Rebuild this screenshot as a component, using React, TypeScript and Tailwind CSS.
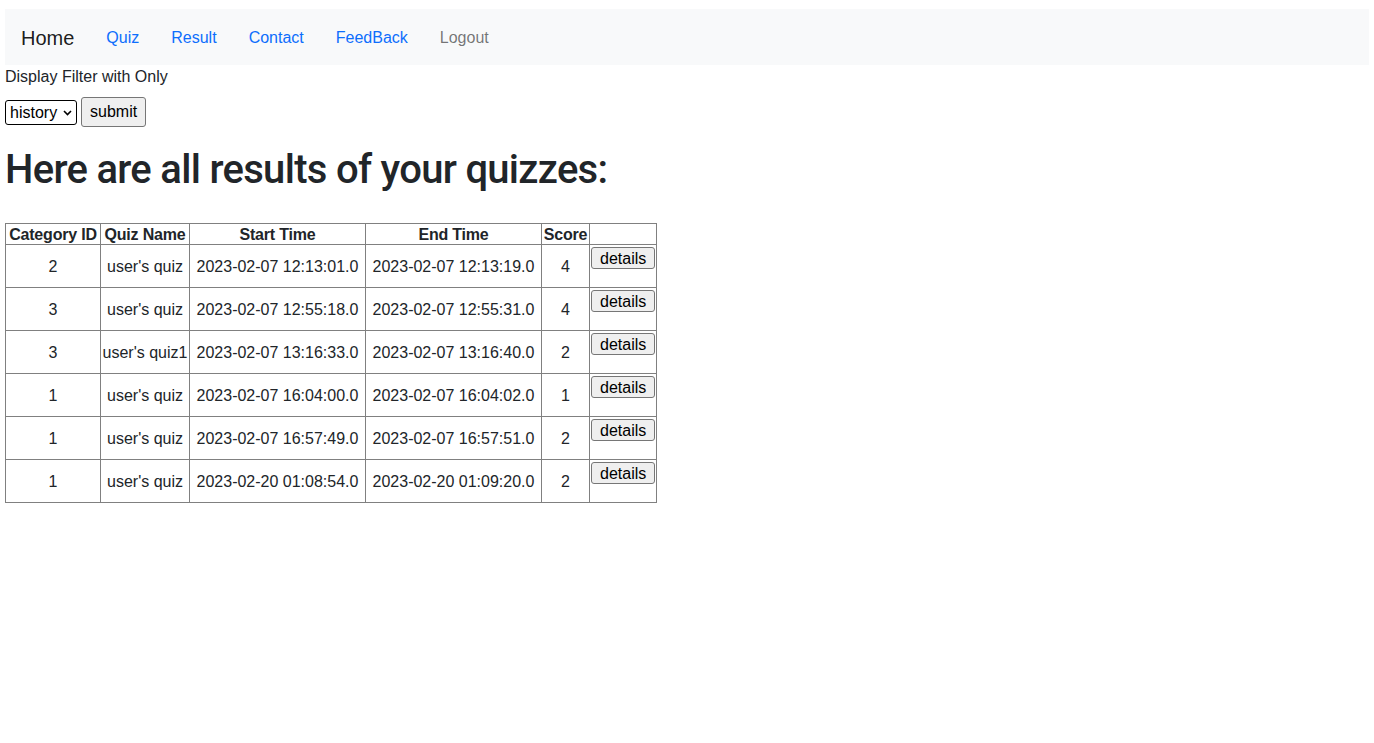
import React from "react";

type Result = {
  categoryId: number;
  quizName: string;
  start: string;
  end: string;
  score: number;
};

const results: Result[] = [
  { categoryId: 2, quizName: "user's quiz", start: "2023-02-07 12:13:01.0", end: "2023-02-07 12:13:19.0", score: 4 },
  { categoryId: 3, quizName: "user's quiz", start: "2023-02-07 12:55:18.0", end: "2023-02-07 12:55:31.0", score: 4 },
  { categoryId: 3, quizName: "user's quiz1", start: "2023-02-07 13:16:33.0", end: "2023-02-07 13:16:40.0", score: 2 },
  { categoryId: 1, quizName: "user's quiz", start: "2023-02-07 16:04:00.0", end: "2023-02-07 16:04:02.0", score: 1 },
  { categoryId: 1, quizName: "user's quiz", start: "2023-02-07 16:57:49.0", end: "2023-02-07 16:57:51.0", score: 2 },
  { categoryId: 1, quizName: "user's quiz", start: "2023-02-20 01:08:54.0", end: "2023-02-20 01:09:20.0", score: 2 },
];

const navLinks = ["Quiz", "Result", "Contact", "FeedBack"];

function NativeButton({ children }: { children: React.ReactNode }) {
  return (
    <button className="h-[22px] rounded-[3px] border border-[#767676] bg-[#efefef] px-[8px] text-[16px] leading-[19px] text-black">
      {children}
    </button>
  );
}

export default function App() {
  return (
    <div className="min-h-screen bg-white px-[5px] pt-[9px] font-['Liberation_Sans',Arial,sans-serif] text-[16px] text-[#212529]">
      <nav className="flex h-[56px] items-center bg-[#f8f9fa] px-4 pt-[1px]">
        <span className="mr-4 text-[20px] leading-[30px] text-black/90">Home</span>
        {navLinks.map((l) => (
          <a key={l} className="px-4 leading-6 text-[#0d6efd]">
            {l}
          </a>
        ))}
        <a className="px-4 leading-6 text-black/55">Logout</a>
      </nav>

      <div className="leading-6">Display Filter with Only</div>
      <form className="mt-2 flex items-center gap-1">
        <div className="relative">
          <select
            defaultValue="history"
            className="h-[25px] w-[72px] appearance-none rounded-[3px] border border-black bg-white pl-[4px] text-[16px] leading-[19px] text-black"
          >
            <option>history</option>
          </select>
          <svg
            className="pointer-events-none absolute right-[5px] top-[10px]"
            width="9"
            height="6"
            viewBox="0 0 9 6"
          >
            <path d="M1 1l3.5 3.5L8 1" fill="none" stroke="black" strokeWidth="1.6" />
          </svg>
        </div>
        <button className="h-[30px] rounded-[3px] border border-[#767676] bg-[#efefef] px-[8px] text-[16px] text-black">
          submit
        </button>
      </form>

      <h1 className="mt-[19px] font-['Roboto','Liberation_Sans',sans-serif] text-[40px] font-medium leading-[48px] tracking-[-0.7px]">
        Here are all results of your quizzes:
      </h1>

      <table className="mt-[29px] table-fixed border-collapse border border-[#808080] text-[16px] leading-[19px]">
        <colgroup>
          <col className="w-[95px]" />
          <col className="w-[89px]" />
          <col className="w-[176px]" />
          <col className="w-[176px]" />
          <col className="w-[48px]" />
          <col className="w-[67px]" />
        </colgroup>
        <thead>
          <tr className="h-[21px]">
            {["Category ID", "Quiz Name", "Start Time", "End Time", "Score", ""].map((h, i) => (
              <th
                key={i}
                className="whitespace-nowrap border border-[#808080] p-0 text-center font-bold tracking-[-0.2px]"
              >
                {h}
              </th>
            ))}
          </tr>
        </thead>
        <tbody>
          {results.map((r, i) => (
            <tr key={i} className="h-[43px]">
              <td className="border border-[#808080] p-0 text-center">{r.categoryId}</td>
              <td className="whitespace-nowrap border border-[#808080] p-0 text-center">{r.quizName}</td>
              <td className="whitespace-nowrap border border-[#808080] p-0 text-center">{r.start}</td>
              <td className="whitespace-nowrap border border-[#808080] p-0 text-center">{r.end}</td>
              <td className="border border-[#808080] p-0 text-center">{r.score}</td>
              <td className="border border-[#808080] px-[1px] pt-[2px] align-top">
                <NativeButton>details</NativeButton>
              </td>
            </tr>
          ))}
        </tbody>
      </table>
    </div>
  );
}
